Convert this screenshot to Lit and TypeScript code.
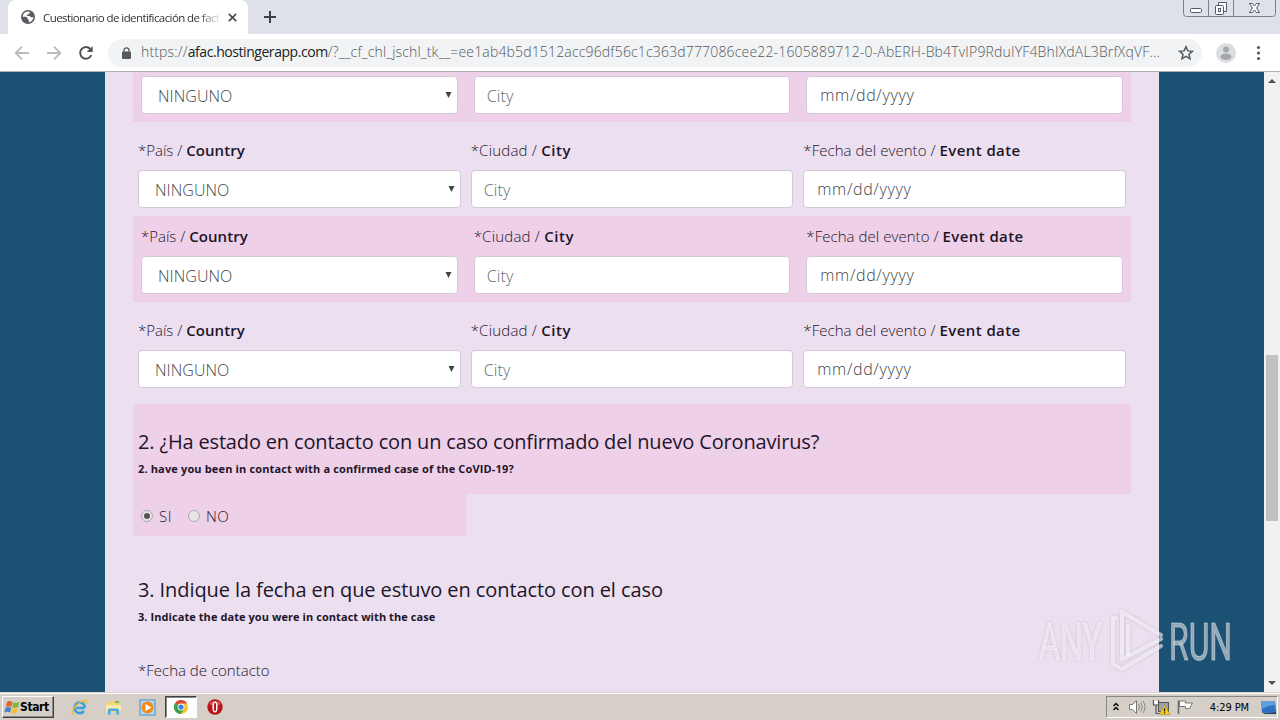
import { LitElement, html, css, nothing } from "lit";
import { customElement, property } from "lit/decorators.js";

@customElement("form-row")
class FormRow extends LitElement {
  @property({ type: Boolean, reflect: true }) tinted = false;
  @property({ type: Boolean, reflect: true }) bare = false;

  static styles = css`
    :host { display: grid; grid-template-columns: repeat(3, 1fr); height: 94px; box-sizing: border-box; padding-top: 16px; color: #1e1529; }
    :host([tinted]) { height: 86px; padding-top: 8px; background: #eed0e9; }
    :host([bare]) { height: 50px; padding-top: 4px; }
    .cell { padding: 0 5px; min-width: 0; }
    :host([tinted]) .cell { padding: 0 8px; }
    .label { height: 24px; line-height: 24px; margin-bottom: 8px; font-size: 15px; font-weight: 300; white-space: nowrap; }
    b { font-weight: 600; }
    .c1 b { letter-spacing: 0.05px; }
    .c2 { letter-spacing: 0.2px; }
    .c2 b { letter-spacing: 0.6px; }
    .c3 { letter-spacing: 0.05px; }
    .c3 b { letter-spacing: 0.4px; }
    .control { height: 38px; box-sizing: border-box; border: 1px solid #d2cad9; border-radius: 4px; background: #fff; color: #41464b; font-size: 16px; font-weight: 300; line-height: 38px; padding: 0 12px; display: flex; justify-content: space-between; }
    .select { padding: 0 5px 0 16px; letter-spacing: 0.05px; }
    .select svg { margin-top: 15px; }
    .city { color: #636b73; letter-spacing: 0.15px; }
    .date { letter-spacing: 0.65px; line-height: 36px; padding-left: 13px; }
  `;

  render() {
    return html`
      <div class="cell">
        ${this.bare ? nothing : html`<div class="label c1">*País / <b>Country</b></div>`}
        <div class="control select"><span>NINGUNO</span><svg width="7" height="6"><path d="M.5 0h6L3.5 6z" fill="#444" /></svg></div>
      </div>
      <div class="cell">
        ${this.bare ? nothing : html`<div class="label c2">*Ciudad / <b>City</b></div>`}
        <div class="control city">City</div>
      </div>
      <div class="cell">
        ${this.bare ? nothing : html`<div class="label c3">*Fecha del evento / <b>Event date</b></div>`}
        <div class="control date">mm/dd/yyyy</div>
      </div>`;
  }
}

@customElement("app-root")
class AppRoot extends LitElement {
  static styles = css`
    :host { display: flex; flex-direction: column; width: 1280px; height: 720px; overflow: hidden; position: relative; font-family: "Open Sans", "Noto Sans", sans-serif; }
    svg { display: block; flex: none; }
    .tabs { height: 34px; background: #dee1e9; display: flex; flex: none; }
    .tab { margin-left: 8px; width: 240px; background: #fff; border-radius: 8px 8px 0 0; display: flex; align-items: center; box-sizing: border-box; padding: 0 11px 0 13px; }
    .title { width: 176px; margin: 0 9px 0 8px; overflow: hidden; white-space: nowrap; font-size: 11.5px; letter-spacing: -0.58px; color: #303438; -webkit-mask-image: linear-gradient(90deg, #000 155px, transparent 179px); }
    .plus { margin: 11px 0 0 16px; }
    .wins { margin-left: auto; margin-right: 4px; }
    .bar { height: 37px; border-bottom: 1px solid #aeb0b3; background: #fff; display: flex; align-items: center; flex: none; padding-left: 14px; }
    .nav { display: flex; gap: 16px; }
    .omni { margin-left: 14px; width: 1094px; flex: none; box-sizing: border-box; height: 28px; border-radius: 14px; background: #f1f3f4; display: flex; align-items: center; padding: 0 8px 0 14px; }
    .url { margin-left: 10px; white-space: nowrap; font-size: 14px; line-height: 20px; margin-top: -1px; font-weight: 300; color: #54585d; margin-right: auto; letter-spacing: 0.165px; }
    .url b { font-weight: 400; color: #202124; letter-spacing: -0.44px; }
    .avatar { margin-left: 14px; }
    .view { height: 620px; flex: none; background: #1b5274; display: flex; }
    .page { margin-left: 105px; width: 1054px; height: 620px; overflow: hidden; box-sizing: border-box; padding: 0 28px; background: #ebdff0; }
    .scroll { margin-left: auto; width: 16px; background: #f1f1f1; display: flex; flex-direction: column; align-items: center; padding: 7px 0; box-sizing: border-box; }
    .thumb { width: 12px; height: 166px; background: #c1c1c1; margin: 272px 0 auto; }
    .question { color: #1e1529; padding: 24px 5px 0; height: 90px; box-sizing: border-box; }
    .pink { background: #eed0e9; }
    .q2 { margin-top: 8px; }
    .q3 { margin-top: 16px; }
    h2 { margin: 0; font-size: 20px; line-height: 28px; font-weight: 400; white-space: nowrap; }
    h3 { margin: 0; font-size: 11px; line-height: 26px; font-weight: 700; white-space: nowrap; }
    .h2a { letter-spacing: -0.16px; }
    .h2b { letter-spacing: -0.09px; }
    .h3a { letter-spacing: 0.15px; }
    .h3b { letter-spacing: 0.07px; }
    .radios { width: 333px; height: 42px; display: flex; align-items: center; padding: 0 0 0 8px; box-sizing: border-box; font-size: 15px; font-weight: 300; letter-spacing: 0.45px; color: #1e1529; }
    .radios span { margin: 2px 16px 0 6px; }
    .dot { width: 12px; height: 12px; box-sizing: border-box; border: 1px solid #aaa; border-radius: 50%; background: #e6e6e6; margin-top: 2px; display: grid; place-items: center; }
    .on::after { content: ""; width: 6px; height: 6px; border-radius: 50%; background: #555; }
    .contact { padding: 18px 5px; font-size: 15px; font-weight: 300; color: #1e1529; }
    .mark { position: absolute; left: 1030px; top: 600px; font-family: "Liberation Sans Narrow", Roboto, sans-serif; filter: drop-shadow(0 0 1.500px rgba(90, 70, 100, 0.35)); }
    .task { height: 28px; flex: none; background: #d5cfc7; border-top: 1px solid #d5cfc7; box-shadow: inset 0 1px #fff; box-sizing: border-box; display: flex; align-items: center; padding-top: 1px; font-family: "DejaVu Sans Condensed", "DejaVu Sans", sans-serif; color: #000; }
    .start { width: 52px; height: 22px; box-sizing: border-box; margin-left: 2px; border: 1px solid; border-color: #fff #404040 #404040 #fff; box-shadow: inset -1px -1px #888; display: flex; align-items: center; font-size: 12px; font-weight: 700; letter-spacing: -0.4px; padding-left: 1px; }
    .apps { display: flex; align-items: center; margin-left: 17px; gap: 17px; }
    .active { width: 32px; height: 22px; box-sizing: border-box; border: 1px solid; border-color: #404040 #fff #fff #404040; box-shadow: inset 1px 1px #888; background: #fff; display: grid; place-items: center; margin: 0 -7px 0 -8px; }
    .tray { margin-left: auto; margin-right: 2px; width: 172px; height: 22px; box-sizing: border-box; border: 1px solid; border-color: #888 #fff #fff #888; display: flex; align-items: center; padding: 0 0 0 5px; }
    .clock { font-size: 11px; letter-spacing: -0.1px; margin-left: auto; margin-right: 11px; white-space: nowrap; }
  `;

  render() {
    return html`
      <div class="tabs">
        <div class="tab">
          <svg width="14" height="14" viewBox="0 0 14 14"><circle cx="7" cy="7" r="7" fill="#5a5e63"/><path d="M7 1.6c-3 .2-5.2 2.3-5.3 5.1l3.5.1 1.4 1.3v1.5h1.2v2.7c2.6-.4 4.500-2.600 4.600-5H10L8.700 6.100H5.900V4.800h1.500V3.400h1.400V2z" fill="#fff"/></svg>
          <div class="title">Cuestionario de identificación de fact</div>
          <svg width="9" height="9" viewBox="0 0 9 9"><path d="M.8.8l7.4 7.4M8.2.8L.8 8.2" stroke="#4b4f54" stroke-width="1.7"/></svg>
        </div>
        <svg class="plus" width="12" height="12"><path d="M6 0v12M0 6h12" stroke="#3c4043" stroke-width="2"/></svg>
        <svg class="wins" width="93" height="17" viewBox="0 0 93 17" fill="none" stroke="#7b8088"><path d="M.5 0v13.500q0 3 3 3h86q3 0 3-3V0M25.500 0v16M50.500 0v16"/><g stroke="#555a62"><rect x="7.500" y="8.500" width="11" height="4" rx="1" fill="#fff"/><path d="M35.500 5.500v-3h8v9h-3" fill="#fff"/><rect x="32.500" y="5.500" width="8" height="9" rx="1" fill="#fff"/><rect x="35.500" y="8.500" width="2" height="3"/><path d="M66.500 3.500h3l2 2.500 2-2.500h3l-3 4.500 3 4.500h-3l-2-2.500-2 2.500h-3l3-4.500z" fill="#fff"/></g></svg>
      </div>
      <div class="bar">
        <div class="nav">
          <svg width="16" height="16" viewBox="0 0 16 16"><path d="M15 8H2M8 1.700L1.700 8 8 14.300" fill="none" stroke="#b9bbbe" stroke-width="1.800"/></svg>
          <svg width="16" height="16" viewBox="0 0 16 16"><path d="M1 8h13M8 1.700L14.300 8 8 14.300" fill="none" stroke="#b9bbbe" stroke-width="1.800"/></svg>
          <svg width="16" height="16" viewBox="0 0 16 16"><path d="M13.300 10.200A5.800 5.800 0 1 1 12.300 4" fill="none" stroke="#505459" stroke-width="2"/><path d="M14.700 1v6H8.700z" fill="#505459"/></svg>
        </div>
        <div class="omni">
          <svg width="9" height="12" viewBox="0 0 9 12"><rect y="4.500" width="9" height="7.500" rx="1" fill="#565a5f"/><path d="M2 5V3.300a2.500 2.500 0 0 1 5 0V5" fill="none" stroke="#565a5f" stroke-width="1.300"/></svg>
          <div class="url">https://<b>afac.hostingerapp.com</b>/?__cf_chl_jschl_tk__=ee1ab4b5d1512acc96df56c1c363d777086cee22-1605889712-0-AbERH-Bb4TvIP9RduIYF4BhIXdAL3BrfXqVF...</div>
          <svg width="16" height="16" viewBox="0 0 16 16"><path d="M8 1.700l1.900 4.200 4.500.4-3.400 3 1 4.500L8 11.400l-4 2.400 1-4.500-3.400-3 4.500-.4z" fill="none" stroke="#55595e" stroke-width="1.500"/></svg>
        </div>
        <svg class="avatar" width="20" height="20" viewBox="0 0 20 20"><circle cx="10" cy="10" r="10" fill="#dcdde0"/><circle cx="10" cy="6.500" r="3" fill="#a5a8ac"/><ellipse cx="10" cy="13.700" rx="5.500" ry="3.200" fill="#a5a8ac"/></svg>
        <svg width="42" height="16" viewBox="0 0 42 16" fill="#55595e"><circle cx="22.500" cy="2.500" r="1.600"/><circle cx="22.500" cy="8" r="1.600"/><circle cx="22.500" cy="13.500" r="1.600"/></svg>
      </div>
      <div class="view">
        <div class="page">
          <form-row tinted bare></form-row>
          <form-row></form-row>
          <form-row tinted></form-row>
          <form-row></form-row>
          <div class="question pink q2">
            <h2 class="h2a">2. ¿Ha estado en contacto con un caso confirmado del nuevo Coronavirus?</h2>
            <h3 class="h3a">2. have you been in contact with a confirmed case of the CoVID-19?</h3>
          </div>
          <div class="radios pink"><i class="dot on"></i><span>SI</span><i class="dot"></i><span>NO</span></div>
          <div class="question q3">
            <h2 class="h2b">3. Indique la fecha en que estuvo en contacto con el caso</h2>
            <h3 class="h3b">3. Indicate the date you were in contact with the case</h3>
          </div>
          <div class="contact">*Fecha de contacto</div>
        </div>
        <div class="scroll">
          <svg width="8" height="4"><path d="M0 4h8L4 0z" fill="#505050"/></svg>
          <div class="thumb"></div>
          <svg width="8" height="4"><path d="M0 0h8L4 4z" fill="#505050"/></svg>
        </div>
      </div>
      <div class="task">
        <div class="start">
          <svg width="16" height="15" viewBox="0 0 16 15"><path d="M3 2q3-1.800 5.500 0L7.300 7Q5 5.500 1.800 6.800z" fill="#e8622c"/><path d="M9.300 2.300q3 1.200 6-.3L14 7q-3 1.500-5.800.2z" fill="#7db83a"/><path d="M1.600 7.700q3-1.300 5.500.2L6 12.600q-2.500-1.800-5.600-.2z" fill="#3f83d0"/><path d="M8 8.200q3 1.200 5.700-.1l-1.200 4.700q-3 1.500-5.700 0z" fill="#f5bd2c"/></svg>
          <span>Start</span>
        </div>
        <div class="apps">
          <svg width="17" height="17" viewBox="0 0 17 17"><path d="M13.500 9H5.200M14 8.600a5.300 5.300 0 1 0-1 3.300" fill="none" stroke="#36a0dc" stroke-width="2.600"/><path d="M2.300 15.500C-1 14 2.500 7.500 8 4s9-3.500 7.300.5" fill="none" stroke="#e8bd36" stroke-width="1.400"/></svg>
          <svg width="17" height="17" viewBox="0 0 17 17"><path d="M1 3h5l1-1h7v3h1.500v8H1z" fill="#efd67c"/><path d="M1 6h15v6H1z" fill="#f9edae"/><path d="M3 15.500V11q0-1.500 1.500-1.500h8q1.500 0 1.500 1.500v4.500h-2.600V12H5.600v3.500z" fill="#4fa9dc"/><path d="M10 3h4" stroke="#53a54e" stroke-width="1.500"/></svg>
          <svg width="17" height="17" viewBox="0 0 17 17"><rect x="1" y="1" width="15" height="15" fill="#b5d7f1" stroke="#4d90c6"/><circle cx="8.500" cy="8.500" r="6" fill="#f28a1b"/><path d="M6.500 5l6 3.500-6 3.500z" fill="#fff"/></svg>
          <div class="active"><svg width="14" height="14" viewBox="0 0 14 14"><circle cx="7" cy="7" r="7" fill="#f7c52d"/><path d="M7 7L.9 3.500A7 7 0 0 1 13.100 3.500H7z" fill="#df4634"/><path d="M.9 3.500A7 7 0 0 0 6.800 14L10 8.700 7 7z" fill="#36a150"/><circle cx="7" cy="7" r="3.400" fill="#fff"/><circle cx="7" cy="7" r="2.600" fill="#4080e0"/></svg></div>
          <svg width="16" height="16" viewBox="0 0 16 16"><circle cx="8" cy="8" r="7.700" fill="#b81419"/><path d="M2 5a6.500 5 0 0 1 12 0Q8 8 2 5" fill="#e0524c"/><path d="M8 2.500c-1.800 0-2.600 2-2.600 5.500s.8 5.500 2.600 5.500 2.600-2 2.600-5.500S9.800 2.500 8 2.500" fill="#fff"/><rect x="7" y="4" width="2" height="8" rx="1" fill="#b81419"/></svg>
        </div>
        <div class="tray">
          <svg width="82" height="18" viewBox="0 0 82 18" fill="none"><path d="M1.500 8L4 5.500 6.500 8M1.500 12L4 9.500 6.500 12" stroke="#000" stroke-width="1.400"/><path d="M17.500 6.500h3l4-4v13l-4-4h-3z" fill="#fff" stroke="#777"/><path d="M26.500 6q2 3 0 6M28.800 4.500q3 4.500 0 9M31 3q4 6 0 12" stroke="#888"/><rect x="46.500" y="4.500" width="10" height="9" fill="#9aa3ac" stroke="#555"/><path d="M42 2.500h4v4h-4z" fill="#fff"/><path d="M41.500 2v5h5V2M44 7.500v8h5" stroke="#555" stroke-width="1.200"/><path d="M52.500 7l5.500 9.500H47z" fill="#f5d021" stroke="#a98a12" stroke-width=".6"/><path d="M52.500 10.300v3.200M52.500 14.300v1.200" stroke="#222" stroke-width="1.300"/><path d="M66.500 16V2.500" stroke="#666" stroke-width="1.500"/><path d="M67.500 3h6v2h7l-3 5.500h-4v-2h-6z" fill="#fff" stroke="#777"/></svg>
          <span class="clock">4:29 PM</span>
          <svg width="17" height="16" viewBox="0 0 17 16"><path d="M1 2h14l1 11-14 1z" fill="#2c70bf"/><path d="M1 2h14l.4 4Q9 6 2 10z" fill="#619edb"/><path d="M3 14l13-1v2H5z" fill="#183d73"/></svg>
        </div>
      </div>
      <svg class="mark" width="210" height="80" viewBox="0 0 210 80" fill="#fff" fill-opacity=".5">
        <g stroke="#fff" stroke-opacity=".4" stroke-width="1.200">
          <text x="9" y="59.500" font-size="52" textLength="63" lengthAdjust="spacingAndGlyphs">ANY</text>
          <text x="139" y="59.500" font-size="52" textLength="63" lengthAdjust="spacingAndGlyphs">RUN</text>
        </g>
        <g fill="none" stroke="#fff" stroke-opacity=".6" stroke-width="4" stroke-linejoin="round" stroke-linecap="round"><path d="M86 18h-3v46l9 5L131 46"/><path d="M131 35L92 12v47L131 39"/><path d="M98 26v28"/></g>
      </svg>`;
  }
}
